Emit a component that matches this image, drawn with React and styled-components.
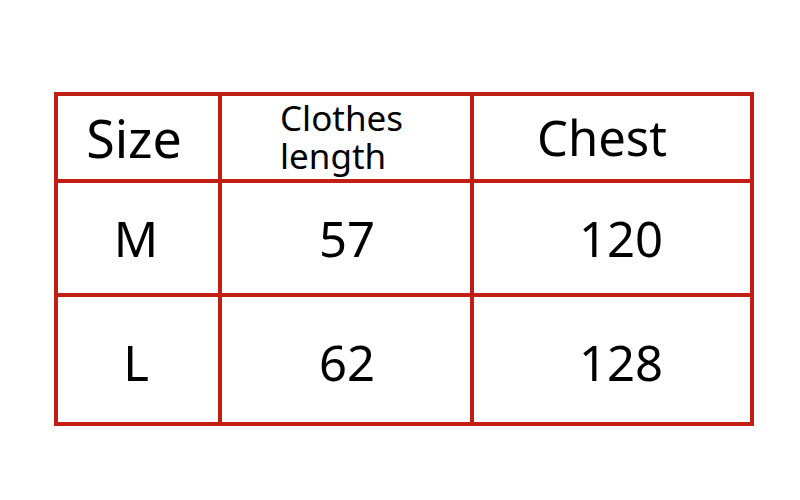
import React from 'react'
import styled, { createGlobalStyle } from 'styled-components';

const rows = [
    { size: 'M', length: '57', chest: '120', tall: false },
    { size: 'L', length: '62', chest: '128', tall: true },
]

function App() {
    return (
        <>
            <GlobalStyle />
            <Page>
                <Table>
                    <Cell pad="0 8px 0 0"><Label big>Size</Label></Cell>
                    <HeadCell><SmallLabel>Clothes<br />length</SmallLabel></HeadCell>
                    <Cell pad="0 20px 0 0"><Label>Chest</Label></Cell>
                    {rows.map((row) => (
                        <React.Fragment key={row.size}>
                            <Cell pad={row.tall ? '6px 4px 0 0' : '0 4px 0 0'}><Label>{row.size}</Label></Cell>
                            <Cell pad={row.tall ? '6px 0 0 2px' : '0 0 0 2px'}><Label>{row.length}</Label></Cell>
                            <Cell pad={row.tall ? '6px 0 0 18px' : '0 0 0 18px'}><Label>{row.chest}</Label></Cell>
                        </React.Fragment>
                    ))}
                </Table>
            </Page>
        </>
    )
}

export default App;

const GlobalStyle = createGlobalStyle`
    html, body {
        margin: 0;
        padding: 0;
        background: #ffffff;
    }
`

const Page = styled.div`
    width: 800px;
    height: 500px;
    padding: 92px 0 0 54px;
    box-sizing: border-box;
    font-family: "Noto Sans", "Open Sans", sans-serif;
    color: #000;
`

const Table = styled.div`
    display: inline-grid;
    grid-template-columns: 160px 248px 276px;
    grid-template-rows: 83px 110px 125px;
    gap: 4px;
    padding: 4px;
    background: #c11f14;
`

const Cell = styled.div`
    background: #ffffff;
    display: flex;
    justify-content: center;
    align-items: center;
    padding: ${props => props.pad || '0'};
    box-sizing: border-box;
`

const HeadCell = styled(Cell)`
    justify-content: flex-start;
    align-items: flex-start;
    padding: 3px 0 0 58px;
`

const Label = styled.span`
    font-size: ${props => props.big ? 52 : 49}px;
    line-height: 1;
`

const SmallLabel = styled.span`
    font-size: 35px;
    line-height: 38px;
`
